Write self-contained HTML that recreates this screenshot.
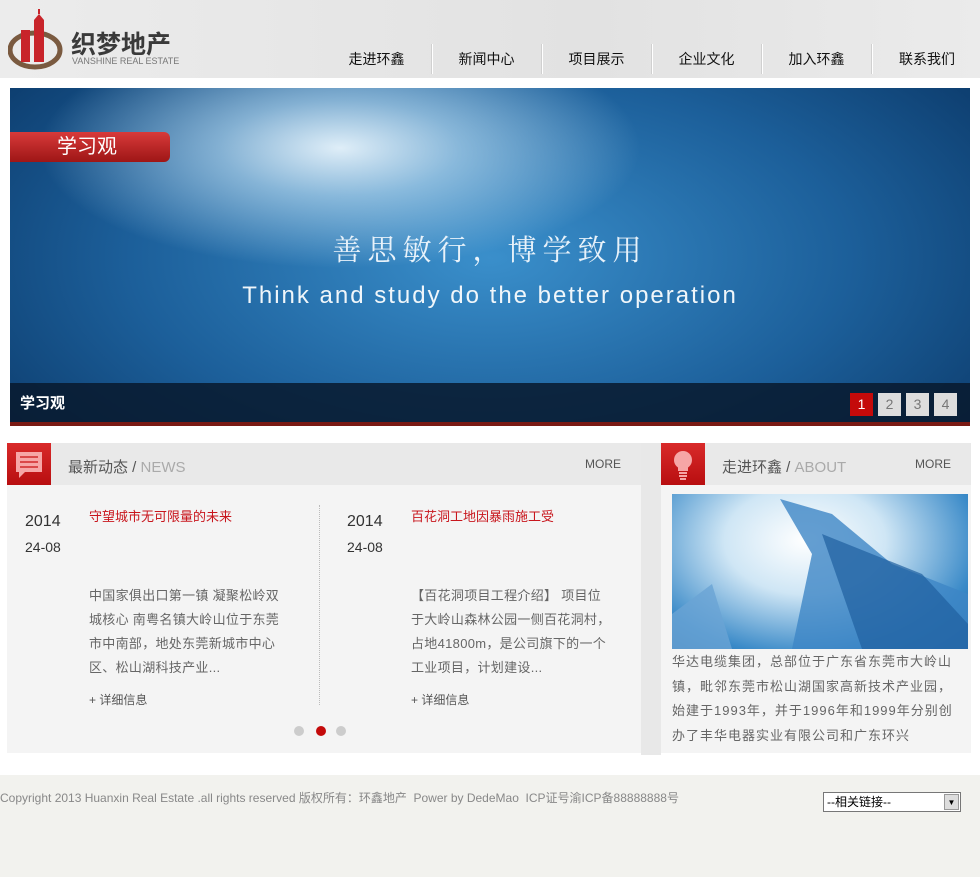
<!DOCTYPE html>
<html><head><meta charset="utf-8"><style>
*{margin:0;padding:0;box-sizing:border-box}
body{width:980px;height:877px;background:#fff;font-family:"Liberation Sans","Noto Sans CJK SC",sans-serif;position:relative;overflow:hidden}
.hdr{position:absolute;left:0;top:0;width:980px;height:78px;background:linear-gradient(90deg,#ececec,#e2e2e2 60%,#ebebeb)}
.nav{position:absolute;top:44px;left:322px;display:flex}
.nav div{width:110px;height:30px;line-height:30px;text-align:center;font-size:14px;color:#111;border-right:1px solid #d0d0d0;box-shadow:1px 0 0 #fff}
.nav div:last-child{border:none;box-shadow:none}
.ban{position:absolute;left:10px;top:88px;width:960px;height:338px;background:radial-gradient(ellipse 300px 120px at 330px 60px,#dfeef8 0%,rgba(200,230,248,.6) 40%,transparent 100%),radial-gradient(ellipse 600px 300px at 480px 170px,#3a8fcb,#1c5f9a 60%,#0d3d6e);overflow:hidden}
.cap{position:absolute;left:0;top:295px;width:960px;height:39px;background:rgba(8,25,45,.85)}
.red{position:absolute;left:0;top:334px;width:960px;height:4px;background:#7a1a14}
.pan{position:absolute;top:443px;background:#f4f4f4}
.ph{height:42px;background:#e9e9e9;position:relative}
.ico{position:absolute;left:0;top:0;width:44px;height:42px;background:linear-gradient(#d92a2a,#b80e10)}
.pt{position:absolute;left:61px;top:13px;font-size:15px;color:#555}
.pt span{color:#aaa}
.more{position:absolute;top:14px;font-size:12px;color:#555}
.item{position:absolute;font-size:13px;color:#666;line-height:24px}
.foot{position:absolute;left:0;top:775px;width:980px;height:102px;background:#f2f2ee}
</style></head><body>
<div class="hdr">
<svg style="position:absolute;left:8px;top:8px" width="56" height="62" viewBox="0 0 56 62">
<ellipse cx="27" cy="42" rx="25" ry="17" fill="none" stroke="#7a5a40" stroke-width="5"/>
<rect x="13" y="22" width="9" height="32" fill="#c8242a"/><rect x="26" y="12" width="10" height="42" fill="#c8242a"/>
<polygon points="26,12 31,6 36,12" fill="#c8242a"/><rect x="30" y="1" width="2" height="5" fill="#c8242a"/>
</svg>
<div style="position:absolute;left:71px;top:25px;font-size:25px;font-weight:bold;color:#3a3a3a">织梦地产</div>
<div style="position:absolute;left:72px;top:56px;font-size:9px;color:#777">VANSHINE REAL ESTATE</div>
<div class="nav"><div>走进环鑫</div><div>新闻中心</div><div>项目展示</div><div>企业文化</div><div>加入环鑫</div><div>联系我们</div></div>
</div>
<div class="ban">
<div style="position:absolute;left:0;top:44px;width:160px;height:30px;background:linear-gradient(#d83a3a,#9e1616);border-radius:0 6px 6px 0;color:#fff;font-size:20px;line-height:30px;padding-left:47px">学习观</div>
<div style="position:absolute;left:0;width:960px;top:140px;text-align:center;font-size:29px;color:#e8f2fa;letter-spacing:6px;font-family:'Noto Serif CJK SC',serif">善思敏行，博学致用</div>
<div style="position:absolute;left:0;width:960px;top:194px;text-align:center;font-size:24px;color:#f0f6fa;letter-spacing:2px">Think and study do the better operation</div>
<div class="cap"><div style="position:absolute;left:10px;top:9px;color:#fff;font-size:15px;font-weight:bold">学习观</div>
<div style="position:absolute;left:840px;top:10px;display:flex;gap:5px;font-size:14px">
<span style="width:23px;height:23px;background:#c40a0a;color:#fff;text-align:center;line-height:23px">1</span>
<span style="width:23px;height:23px;background:#ddd;color:#777;text-align:center;line-height:23px">2</span>
<span style="width:23px;height:23px;background:#ddd;color:#777;text-align:center;line-height:23px">3</span>
<span style="width:23px;height:23px;background:#ddd;color:#777;text-align:center;line-height:23px">4</span></div></div>
<div class="red"></div>
</div>
<div style="position:absolute;left:641px;top:443px;width:20px;height:312px;background:#e8e8e8"></div>
<div class="pan" style="left:7px;width:634px;height:310px">
<div class="ph"><div class="ico"><svg width="44" height="42"><rect x="9" y="9" width="26" height="20" fill="#f6a6a6"/><polygon points="12,29 12,35 18,29" fill="#f6a6a6"/><g stroke="#d0282a" stroke-width="1.5"><line x1="13" y1="14" x2="31" y2="14"/><line x1="13" y1="19" x2="31" y2="19"/><line x1="13" y1="24" x2="31" y2="24"/></g></svg></div>
<div class="pt">最新动态 / <span>NEWS</span></div><div class="more" style="left:578px">MORE</div></div>
<div style="position:absolute;left:312px;top:62px;height:200px;border-left:1px dotted #bbb"></div>
<div class="item" style="left:18px;top:67px;font-size:16px;color:#333">2014</div>
<div class="item" style="left:18px;top:92px;font-size:14px;color:#333">24-08</div>
<div class="item" style="left:82px;top:62px;color:#c8161d">守望城市无可限量的未来</div>
<div class="item" style="left:82px;top:141px;width:200px;letter-spacing:0.3px">中国家俱出口第一镇 凝聚松岭双城核心 南粤名镇大岭山位于东莞市中南部，地处东莞新城市中心区、松山湖科技产业...</div>
<div class="item" style="left:82px;top:245px;font-size:12px;color:#555">+ 详细信息</div>
<div class="item" style="left:340px;top:67px;font-size:16px;color:#333">2014</div>
<div class="item" style="left:340px;top:92px;font-size:14px;color:#333">24-08</div>
<div class="item" style="left:404px;top:62px;color:#c8161d">百花洞工地因暴雨施工受</div>
<div class="item" style="left:404px;top:141px;width:200px;letter-spacing:0.3px">【百花洞项目工程介绍】 项目位于大岭山森林公园一侧百花洞村，占地41800m，是公司旗下的一个工业项目，计划建设...</div>
<div class="item" style="left:404px;top:245px;font-size:12px;color:#555">+ 详细信息</div>
<div style="position:absolute;left:287px;top:283px;width:10px;height:10px;border-radius:50%;background:#ccc"></div>
<div style="position:absolute;left:309px;top:283px;width:10px;height:10px;border-radius:50%;background:#c40a0a"></div>
<div style="position:absolute;left:329px;top:283px;width:10px;height:10px;border-radius:50%;background:#ccc"></div>
</div>
<div class="pan" style="left:661px;width:310px;height:310px">
<div class="ph"><div class="ico"><svg width="44" height="42"><circle cx="22" cy="17" r="9" fill="#f6a6a6"/><rect x="17" y="23" width="10" height="5" fill="#f6a6a6"/><rect x="18" y="29" width="8" height="2" fill="#f6a6a6"/><rect x="18" y="32" width="8" height="2" fill="#f6a6a6"/><rect x="19" y="35" width="6" height="2" fill="#f6a6a6"/></svg></div>
<div class="pt">走进环鑫 / <span>ABOUT</span></div><div class="more" style="left:254px">MORE</div></div>
<div style="position:absolute;left:11px;top:51px;width:296px;height:155px;background:radial-gradient(ellipse at 45% 30%,#fff 0%,#cfe6f5 35%,#3a8ac8 75%,#1a5e9e);overflow:hidden">
<svg width="296" height="155"><polygon points="108,5 160,20 220,70 296,100 296,155 120,155 140,60" fill="#3d86c6" opacity=".8"/><polygon points="0,120 40,90 60,155 0,155" fill="#6aa4d4" opacity=".8"/><polygon points="150,40 250,80 296,130 296,155 190,155" fill="#1f5f9f" opacity=".7"/></svg></div>
<div class="item" style="left:11px;top:207px;width:292px;font-size:13px;line-height:24.5px;letter-spacing:1px">华达电缆集团，总部位于广东省东莞市大岭山镇，毗邻东莞市松山湖国家高新技术产业园，始建于1993年，并于1996年和1999年分别创办了丰华电器实业有限公司和广东环兴</div>
</div>
<div class="foot">
<div style="position:absolute;left:0;top:14px;font-size:12px;color:#888">Copyright 2013 Huanxin Real Estate .all rights reserved 版权所有：环鑫地产 &nbsp;Power by DedeMao &nbsp;ICP证号渝ICP备88888888号</div>
<div style="position:absolute;left:823px;top:17px;width:138px;height:20px;border:1px solid #777;background:#fff;font-size:12px;line-height:18px;padding-left:3px">--相关链接--<span style="position:absolute;right:1px;top:1px;width:15px;height:16px;background:#ddd;border:1px solid #999;font-size:8px;text-align:center;line-height:15px">▼</span></div>
</div>
</body></html>
